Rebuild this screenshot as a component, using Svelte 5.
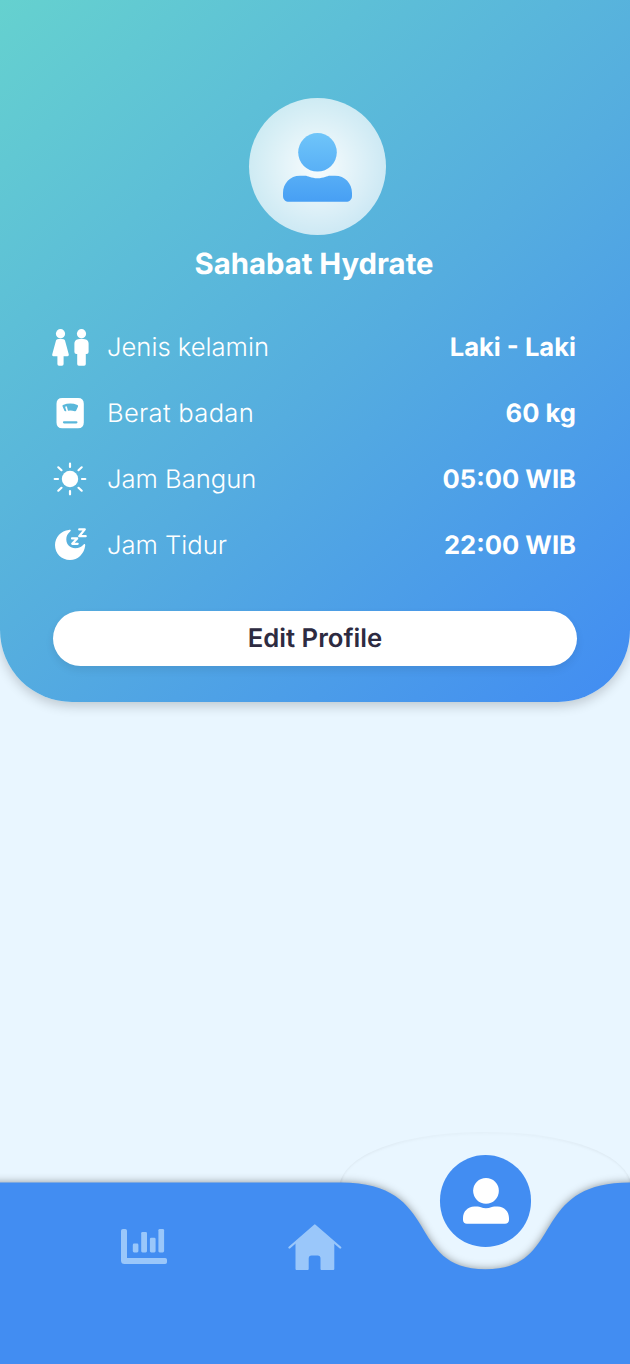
<script>
  const rows = [
    { icon: 'gender', label: 'Jenis kelamin', value: 'Laki - Laki' },
    { icon: 'scale', label: 'Berat badan', value: '60 kg' },
    { icon: 'sun', label: 'Jam Bangun', value: '05:00 WIB' },
    { icon: 'moon', label: 'Jam Tidur', value: '22:00 WIB' }
  ];
</script>

{#snippet person(fill)}
  <circle cx="34.5" cy="19.3" r="19.3" {fill} />
  <path d="M17 42.7H22C25 42.7 28 45.2 34.5 45.2S44 42.7 47 42.7H52C62 42.7 69 50.5 69 60V63C69 66.5 66.5 68.8 63 68.8H6C2.5 68.8 0 66.5 0 63V60C0 50.5 7 42.7 17 42.7Z" {fill} />
{/snippet}

<main class="page">
  <section class="card">
    <div class="avatar">
      <svg width="69" height="69" viewBox="0 0 69 69">
        <defs>
          <linearGradient id="blue" gradientUnits="userSpaceOnUse" x1="34" y1="0" x2="34" y2="69">
            <stop offset="0" stop-color="#6fc5f9" />
            <stop offset="1" stop-color="#479ff4" />
          </linearGradient>
        </defs>
        {@render person('url(#blue)')}
      </svg>
    </div>
    <h1>Sahabat Hydrate</h1>

    <ul class="rows">
      {#each rows as row}
        <li>
          <svg class="icon" width="40" height="40" viewBox="0 0 40 40" fill="#fff">
            {#if row.icon === 'gender'}
              <circle cx="10.5" cy="6.7" r="4.6" />
              <path d="M7.3 12.3Q10.5 11.4 13.7 12.3Q14.7 12.6 15 13.6L18.8 27.5Q19 29 17.5 29.2H13.6V37Q13.6 38.7 12 38.7H9Q7.4 38.7 7.4 37V29.2H3.4Q1.8 29 2.2 27.5L6 13.6Q6.3 12.6 7.3 12.3Z" />
              <circle cx="31.5" cy="6.7" r="4.6" />
              <path d="M28 12.3Q31.5 11.4 35 12.3Q38.6 13.2 38.6 16.5V25Q38.6 27 36.5 27H35.8V37Q35.8 38.7 34.2 38.7H28.8Q27.2 38.7 27.2 37V27H26.5Q24.4 27 24.4 25V16.5Q24.4 13.2 28 12.3Z" />
            {:else if row.icon === 'scale'}
              <path fill-rule="evenodd" d="M12.3 5H28Q33.8 5 33.8 10.8V29.5Q33.8 35.3 28 35.3H12.3Q6.5 35.3 6.5 29.5V10.8Q6.5 5 12.3 5ZM12.5 13.3L14.3 17.5Q14.7 18.5 15.8 18.2Q20.4 16.7 24.7 18.2Q25.8 18.5 26.2 17.5L28 13.4Q28.3 12.3 27.4 11.9Q20.3 9.2 13 11.9Q12.2 12.3 12.5 13.3ZM14 28.2Q12.9 28.2 12.9 29.3T14 30.4H26.4Q27.5 30.4 27.5 29.3T26.4 28.2Z" />
              <path d="M15.900 13.6L17.300 18.2" fill="none" stroke="#fff" stroke-width="1.7" />
            {:else if row.icon === 'sun'}
              <circle cx="20" cy="20" r="8.2" />
              <path d="M20 4.7V8M20 32V35.3M4.7 20H8M32 20H35.3M8.3 8.3L11.5 11.2M28.5 11.2L31.7 8.3M8.3 31.7L11.5 28.8M28.5 28.8L31.7 31.7" fill="none" stroke="#fff" stroke-width="2.2" stroke-linecap="round" />
            {:else}
              <path d="M18.8 4.9C20.6 4.7 21.5 5.3 20.2 6.5C17.6 8.6 16.3 11.3 16.3 14.3C16.3 19.7 20.3 23.3 25.2 23.3C29 23.3 31.5 21.9 33.3 19.8C34.5 18.5 35.4 19.2 35.2 20.7C34 28.8 28 35 20 35C11.5 35 5 28.5 5 20C5 12 11.2 5.6 18.8 4.9Z" />
              <path d="M29.2 4.4H34.8L29.2 11.2H35.7M22 13.4H27.2L22.2 18.8H27.7" fill="none" stroke="#fff" stroke-width="2.2" stroke-linecap="round" stroke-linejoin="round" />
            {/if}
          </svg>
          <span class="label {row.icon}">{row.label}</span>
          <strong>{row.value}</strong>
        </li>
      {/each}
    </ul>

    <button>Edit Profile</button>
  </section>

  <nav>
    <svg class="nav-bg" width="630" height="244" viewBox="0 0 630 244">
      <defs>
        <filter id="soft" x="-20%" y="-20%" width="140%" height="140%">
          <feGaussianBlur stdDeviation="4.5" />
        </filter>
        <filter id="faint" x="-20%" y="-20%" width="140%" height="140%">
          <feGaussianBlur stdDeviation="1.8" />
        </filter>
        <linearGradient id="rim" gradientUnits="userSpaceOnUse" x1="0" y1="12" x2="0" y2="64">
          <stop offset="0" stop-opacity=".03" />
          <stop offset="1" stop-opacity=".16" />
        </linearGradient>
        <clipPath id="dome"><path d="M339 70C339 34 404 12 485.500 12S632 34 632 70Z" /></clipPath>
      </defs>
      <g clip-path="url(#dome)">
        <path d="M339 80V64C340 34 404 12 485.500 12S631 34 632 64V80" fill="none" stroke="url(#rim)" stroke-width="2.500" filter="url(#faint)" />
      </g>
      <path d="M-20 62.600H341C443 62.600 405 149.300 485.500 149.300S528 62.600 630 62.600H660V270H-20Z" fill="#000" fill-opacity=".4" filter="url(#soft)" />
      <path d="M-20 62.600H341C443 62.600 405 149.300 485.500 149.300S528 62.600 630 62.600H660V270H-20Z" fill="#428df2" />
    </svg>
    <div class="tabs">
      <a class="stats" href="#stats" aria-label="Statistik">
        <svg width="46" height="36" viewBox="0 0 46 36" fill="#9ac7fa">
          <path d="M2 0H4.200Q6 0 6 1.800V29H44.200Q46 29 46 30.800V33.200Q46 35 44.200 35H3.500Q0 35 0 31.500V1.800Q0 0 2 0Z" />
          <rect x="11.800" y="14.600" width="5.600" height="8.800" rx="1.300" />
          <rect x="20.200" y="2.900" width="5.800" height="20.500" rx="1.300" />
          <rect x="28.900" y="8.800" width="5.700" height="14.600" rx="1.300" />
          <rect x="37.400" y="0" width="5.700" height="23.400" rx="1.300" />
        </svg>
      </a>
      <a class="home" href="#home" aria-label="Beranda">
        <svg width="54" height="47" viewBox="0 0 54 47">
          <path d="M26.800 1.500L46.300 18.500V45Q46.300 46 45.300 46H33.500Q32.500 46 32.500 45V34.500Q32.500 31.600 29.600 31.600H23.600Q20.700 31.600 20.700 34.500V45Q20.700 46 19.700 46H8.500Q7.500 46 7.500 45V18.500Z" fill="#9ac7fa" />
          <path d="M1.500 23.500L26.800 1.500L52.200 23.500" fill="none" stroke="#9ac7fa" stroke-width="2.300" stroke-linecap="round" stroke-linejoin="round" />
        </svg>
      </a>
      <a class="profile" href="#profile" aria-label="Profil">
        <svg width="46" height="46" viewBox="0 0 69 69">{@render person('#fff')}</svg>
      </a>
    </div>
  </nav>
</main>

<style>
  :global(body) { margin: 0; background: #e9f6ff; }
  .page {
    width: 630px; height: 1364px; overflow: hidden;
    display: flex; flex-direction: column;
    background: #e9f6ff; font-family: Inter, sans-serif; color: #fff;
    text-rendering: geometricPrecision;
  }
  .card {
    box-sizing: border-box; height: 702px; padding: 98px 53px 0;
    display: flex; flex-direction: column; align-items: center;
    border-radius: 0 0 72px 72px;
    background: linear-gradient(138deg, #65d1cf 0%, #55addf 53%, #428df2 99%);
    box-shadow: 0 4px 12px rgba(0, 0, 0, .19);
  }
  .avatar {
    width: 137px; height: 137px; margin-left: 4px; border-radius: 50%;
    display: flex; align-items: center; justify-content: center; flex: none;
    background: radial-gradient(circle closest-side, rgba(255,255,255,.96), rgba(255,255,255,.7));
  }
  .avatar svg { margin: 1px 0 0 1px; }
  h1 { margin: 12px 2px 0 0; font-size: 29.3px; line-height: 36px; font-weight: 700; flex: none; }
  .rows { width: 100%; margin: 31px 0 0; padding: 0; list-style: none; flex: none; }
  li { height: 66px; display: flex; align-items: center; font-size: 25.6px; line-height: 32px; }
  .icon { margin-left: -3px; flex: none; }
  .label { margin: 2px 0 0 17px; font-weight: 300; }
  .label.scale { letter-spacing: .3px; }
  strong { margin: 2px 1px 0 auto; font-weight: 700; }
  button {
    width: 524px; height: 54.500px; margin: 33px 0 0; padding: 0; border: 0; border-radius: 28px;
    flex: none; background: #fff; color: #2d2b41; font: 600 25.7px Inter, sans-serif;
    text-rendering: geometricPrecision;
    box-shadow: 0 4px 8px rgba(0, 0, 0, .08);
  }
  nav { margin-top: auto; display: grid; height: 244px; }
  .nav-bg, .tabs { grid-area: 1 / 1; }
  .tabs { display: flex; align-items: flex-start; padding-left: 121px; }
  a { display: block; }
  a svg { display: block; }
  .stats { margin-top: 109px; }
  .home { margin: 103.500px 0 0 120.500px; }
  .profile {
    width: 91.500px; height: 91.500px; margin: 35px 0 0 98.300px; border-radius: 50%; background: #428df2;
    display: flex; align-items: center; justify-content: center;
  }
</style>
